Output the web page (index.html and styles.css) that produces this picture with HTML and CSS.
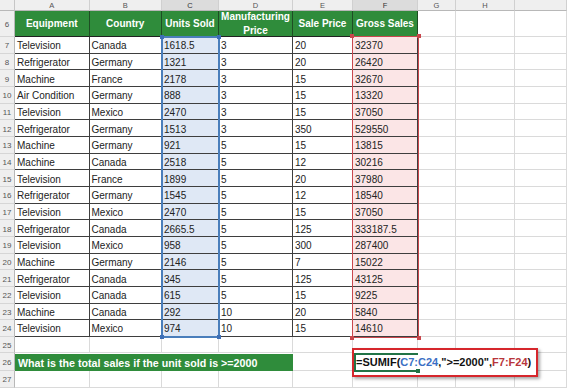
FILE: index.html
```html
<!DOCTYPE html>
<html>
<head>
    <title>SUMIF Example</title>
    <link rel="stylesheet" href="styles.css">
</head>
<body>
    <div class="sheet" id="sheet">
        <!-- selection overlays -->
        <div class="range range-blue">
            <span class="knob tl"></span><span class="knob tr"></span>
            <span class="knob bl"></span><span class="knob br"></span>
        </div>
        <div class="range range-red">
            <span class="knob tl"></span><span class="knob tr"></span>
            <span class="knob bl"></span><span class="knob br"></span>
        </div>
        <div class="formula-box">
            <div class="active-cell"></div>
            <span class="formula">=SUMIF(<span class="ref-blue">C7:C24</span>,"&gt;=2000",<span class="ref-red">F7:F24</span>)</span>
        </div>
    </div>

    <script>
        const cols = ['A', 'B', 'C', 'D', 'E', 'F', 'G', 'H', ''];
        const headers = ['Equipment', 'Country', 'Units Sold', 'Manufacturing Price', 'Sale Price', 'Gross Sales'];
        const rows = [
            ['Television', 'Canada', '1618.5', '3', '20', '32370'],
            ['Refrigerator', 'Germany', '1321', '3', '20', '26420'],
            ['Machine', 'France', '2178', '3', '15', '32670'],
            ['Air Condition', 'Germany', '888', '3', '15', '13320'],
            ['Television', 'Mexico', '2470', '3', '15', '37050'],
            ['Refrigerator', 'Germany', '1513', '3', '350', '529550'],
            ['Machine', 'Germany', '921', '5', '15', '13815'],
            ['Machine', 'Canada', '2518', '5', '12', '30216'],
            ['Television', 'France', '1899', '5', '20', '37980'],
            ['Refrigerator', 'Germany', '1545', '5', '12', '18540'],
            ['Television', 'Mexico', '2470', '5', '15', '37050'],
            ['Refrigerator', 'Canada', '2665.5', '5', '125', '333187.5'],
            ['Television', 'Mexico', '958', '5', '300', '287400'],
            ['Machine', 'Germany', '2146', '5', '7', '15022'],
            ['Refrigerator', 'Canada', '345', '5', '125', '43125'],
            ['Television', 'Canada', '615', '5', '15', '9225'],
            ['Machine', 'Canada', '292', '10', '20', '5840'],
            ['Television', 'Mexico', '974', '10', '15', '14610']
        ];

        const sheet = document.getElementById('sheet');

        function cell(cls, text) {
            let d = document.createElement('div');
            d.className = cls;
            if (text) d.textContent = text;
            sheet.appendChild(d);
            return d;
        }

        // column letters
        cell('corner');
        cols.forEach(c => cell('col-head' + (c == 'C' || c == 'F' ? ' picked' : ''), c));

        // row 6 - table header
        cell('row-head', '6');
        headers.forEach(h => cell('cell head', h));
        for (let i = 0; i < 3; i++) cell('cell');

        // rows 7 - 24
        rows.forEach((r, i) => {
            cell('row-head', String(7 + i));
            r.forEach((v, j) => {
                let cls = 'cell data';
                if (j == 2) cls += ' units';
                if (j == 5) cls += ' gross';
                cell(cls, v);
            });
            for (let k = 0; k < 3; k++) cell('cell');
        });

        // row 25
        cell('row-head', '25');
        for (let k = 0; k < 9; k++) cell('cell');

        // row 26 - question
        cell('row-head', '26');
        cell('cell question', 'What is the total sales if the unit sold is >=2000');
        for (let k = 0; k < 5; k++) cell('cell');

        // row 27
        cell('row-head', '27');
        for (let k = 0; k < 9; k++) cell('cell');
    </script>
</body>
</html>
```

FILE: styles.css
```css
body {
    margin: 0;
    background: #ffffff;
    font-family: "Liberation Sans", Arial, sans-serif;
    overflow: hidden;
}
.sheet {
    position: relative;
    display: grid;
    grid-template-columns: 15px 74.5px 72.5px 57px 74px 60px 65px 38px 59px 1fr;
    grid-template-rows: 11px 26px repeat(18, 16.667px) 16px 18px 17px;
    width: 567px;
    height: 388px;
}
.corner, .col-head, .row-head {
    background: #efefef;
    color: #555;
    font-size: 7.5px;
    display: flex;
    align-items: center;
    justify-content: center;
    box-sizing: border-box;
}
.corner {
    border-right: 1px solid #c6c6c6;
    border-bottom: 1px solid #b8b8b8;
}
.col-head {
    border-right: 1px solid #d0d0d0;
    border-bottom: 1px solid #b8b8b8;
}
.col-head.picked {
    background: #dcdcdc;
    color: #333;
}
.row-head {
    border-right: 1px solid #b8b8b8;
    border-bottom: 1px solid #d6d6d6;
    font-size: 8px;
    padding-top: 2px;
}
.cell {
    box-sizing: border-box;
    border-right: 1px solid #dadada;
    border-bottom: 1px solid #dadada;
    font-size: 10px;
    color: #222;
    padding: 2px 0 0 2px;
    display: flex;
    align-items: center;
    white-space: nowrap;
    overflow: hidden;
}
.head {
    background: #2f8c3b;
    color: #fff;
    font-weight: bold;
    justify-content: center;
    text-align: center;
    white-space: normal;
    line-height: 14px;
    padding: 1px 0 0 0;
    border-right: 1px solid #1e4d24;
    border-bottom: 1px solid #222;
}
.data {
    border-right: 1px solid #3e3e3e;
    border-bottom: 1px solid #3e3e3e;
}
.units {
    background: #dfe8f5;
}
.gross {
    background: #fbe5e6;
}
.question {
    grid-column: span 4;
    background: #2f8c3b;
    color: #fff;
    font-weight: bold;
    font-size: 10.7px;
    padding-left: 3px;
    margin-top: 1px;
    border-right: none;
    border-bottom: none;
}

/* selection ranges */
.range {
    position: absolute;
    grid-row: 3 / 21;
    top: -1px;
    left: -1px;
    right: -1px;
    bottom: -1px;
    z-index: 2;
}
.range-blue {
    grid-column: 4 / 5;
    border: 2px solid #4a7ebb;
}
.range-red {
    grid-column: 7 / 8;
    left: -1px;
    border: 1.5px solid #c9474d;
}
.knob {
    position: absolute;
    width: 4px;
    height: 4px;
}
.range-blue .knob { background: #3e6fb6; }
.range-red .knob { background: #c9474d; }
.knob.tl { top: -3px; left: -3px; }
.knob.tr { top: -3px; right: -3px; }
.knob.bl { bottom: -3px; left: -3px; }
.knob.br { bottom: -3px; right: -3px; }

/* formula callout */
.formula-box {
    position: absolute;
    grid-column: 7 / 11;
    grid-row: 22 / 23;
    top: -5px;
    left: -1px;
    width: 186px;
    height: 29px;
    box-sizing: border-box;
    background: #fff;
    border: 2px solid #d6262c;
    box-shadow: 2px 2px 3px rgba(0, 0, 0, 0.35);
    z-index: 3;
    display: flex;
    align-items: center;
    padding-left: 2px;
}
.active-cell {
    position: absolute;
    left: 0;
    top: 3px;
    width: 64px;
    height: 19px;
    box-sizing: border-box;
    border: 2px solid #217346;
    border-right: none;
}
.active-cell::after {
    content: "";
    position: absolute;
    right: -2px;
    bottom: -3px;
    width: 4px;
    height: 4px;
    background: #217346;
}
.formula {
    position: relative;
    font-size: 11px;
    font-weight: bold;
    color: #111;
}
.ref-blue {
    color: #3a6fc4;
}
.ref-red {
    color: #b8353b;
}
```
